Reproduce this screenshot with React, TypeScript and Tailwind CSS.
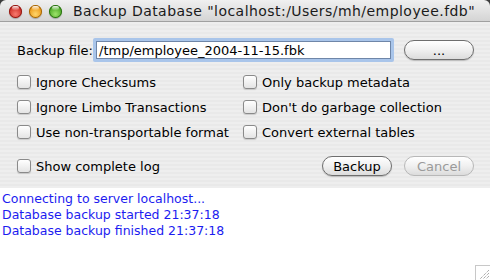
import React from "react";

const font = { fontFamily: '"DejaVu Sans", "Lucida Grande", Verdana, sans-serif' };

function Light({ from, to, border }: { from: string; to: string; border: string }) {
  return (
    <div
      className="w-[13px] h-[13px] rounded-full relative"
      style={{
        background: `radial-gradient(circle at 50% 70%, ${from} 0%, ${to} 75%)`,
        boxShadow: `inset 0 0 0 1px ${border}, 0 1px 1px rgba(0,0,0,0.25)`,
      }}
    >
      <div className="absolute left-[3px] top-[1px] w-[7px] h-[4px] rounded-full bg-gradient-to-b from-white/90 to-white/10" />
    </div>
  );
}

function Checkbox({ label }: { label: string }) {
  return (
    <div className="flex items-center h-[14px]">
      <div className="w-[14px] h-[14px] rounded-[3px] border border-[#8a8a8a] bg-gradient-to-b from-[#ffffff] to-[#e4e4e4] shadow-[0_1px_1px_rgba(0,0,0,0.15)] shrink-0" />
      <span className="ml-[5px] text-[13px] text-black leading-none whitespace-nowrap">{label}</span>
    </div>
  );
}

function Button({ label, disabled }: { label: string; disabled?: boolean }) {
  return (
    <div
      className={
        "w-[70px] h-[20px] rounded-full flex items-center justify-center text-[13px] leading-none bg-gradient-to-b from-[#ffffff] via-[#f0f0f0] to-[#dcdcdc] " +
        (disabled
          ? "border border-[#b8b8b8] text-[#9a9a9a]"
          : "border border-[#6e6e6e] text-black shadow-[0_1px_1px_rgba(0,0,0,0.2)]")
      }
    >
      {label}
    </div>
  );
}

export default function App() {
  return (
    <div className="w-[490px] h-[280px] overflow-hidden bg-[#3c3c3c] flex flex-col" style={font}>
      {/* Title bar */}
      <div className="h-[22px] shrink-0 rounded-t-[6px] bg-gradient-to-b from-[#f0f0f0] via-[#e2e2e2] to-[#d4d4d4] border-b border-[#a0a0a0] flex items-center">
        <div className="flex items-center gap-[7px] pl-[9px] pt-[1px]">
          <Light from="#f77b6f" to="#c8231c" border="#8e1a14" />
          <Light from="#ffd66a" to="#e98f0c" border="#a0650a" />
          <Light from="#9de36a" to="#3fa01c" border="#2a6e12" />
        </div>
        <span className="ml-[11px] text-[14px] tracking-[0.45px] text-[#1a1a1a] whitespace-nowrap leading-none">
          Backup Database "localhost:/Users/mh/employee.fdb"
        </span>
      </div>

      {/* Body */}
      <div className="h-[166px] shrink-0 bg-[repeating-linear-gradient(180deg,#eeeeee_0px,#eeeeee_2px,#e9e9e9_2px,#e9e9e9_4px)] flex flex-col">
        <div className="flex items-center mt-[16px] h-[24px]">
          <span className="ml-[17px] text-[13px] text-black leading-none whitespace-nowrap w-[73px]">Backup file:</span>
          <div className="ml-[3px] w-[301px] h-[24px] rounded-[2px] bg-[#a9c5ea] p-[3px]">
            <div className="w-full h-full bg-white border border-[#6f86a8] flex items-center pl-[2px]">
              <span className="text-[13px] text-black leading-none whitespace-nowrap">/tmp/employee_2004-11-15.fbk</span>
            </div>
          </div>
          <div className="ml-[10px]">
            <Button label="..." />
          </div>
        </div>

        <div className="grid grid-cols-[226px_1fr] ml-[17px] mt-[13px] gap-y-[11px]">
          <Checkbox label="Ignore Checksums" />
          <Checkbox label="Only backup metadata" />
          <Checkbox label="Ignore Limbo Transactions" />
          <Checkbox label="Don't do garbage collection" />
          <Checkbox label="Use non-transportable format" />
          <Checkbox label="Convert external tables" />
        </div>

        <div className="flex items-center mt-[17px] h-[20px]">
          <div className="ml-[17px]">
            <Checkbox label="Show complete log" />
          </div>
          <div className="ml-auto mr-[16px] flex gap-[12px]">
            <Button label="Backup" />
            <Button label="Cancel" disabled />
          </div>
        </div>
      </div>

      {/* Log */}
      <div className="flex-1 bg-white relative pt-[3px] pl-[2px]">
        <div className="text-[12.5px] leading-[16px] text-[#1c1cf0] whitespace-nowrap">
          <div>Connecting to server localhost...</div>
          <div>Database backup started 21:37:18</div>
          <div>Database backup finished 21:37:18</div>
        </div>
        <div className="absolute right-0 bottom-0 w-[15px] h-[15px] border-l border-t border-[#c8c8c8] bg-white">
          <svg width="14" height="14" viewBox="0 0 14 14" className="absolute left-0 top-0">
            <line x1="13" y1="4" x2="4" y2="13" stroke="#8a8a8a" strokeWidth="1" strokeDasharray="1 1" />
            <line x1="13" y1="7" x2="7" y2="13" stroke="#8a8a8a" strokeWidth="1" strokeDasharray="1 1" />
            <line x1="13" y1="10" x2="10" y2="13" stroke="#8a8a8a" strokeWidth="1" strokeDasharray="1 1" />
          </svg>
        </div>
      </div>
    </div>
  );
}
